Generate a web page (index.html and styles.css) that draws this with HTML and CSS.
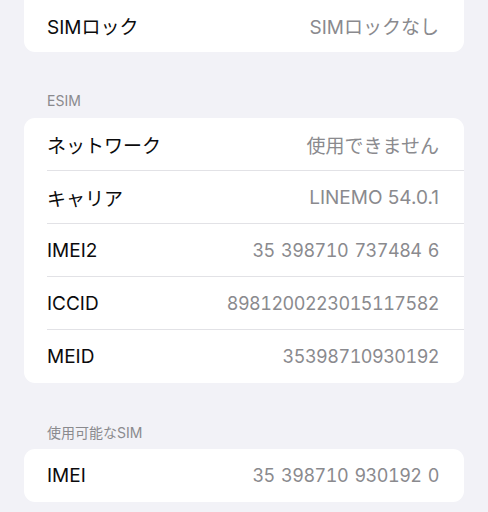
FILE: index.html
```html
<!DOCTYPE html>
<html lang="ja">
<head>
<meta charset="utf-8">
<link rel="stylesheet" href="styles.css">
</head>
<body>
<div class="page">
  <div class="card card-first">
    <div class="row"><span class="label">SIMロック</span><span class="value">SIMロックなし</span></div>
  </div>

  <div class="header header-esim">ESIM</div>
  <div class="card">
    <div class="row"><span class="label">ネットワーク</span><span class="value">使用できません</span></div>
    <div class="row"><span class="label">キャリア</span><span class="value">LINEMO 54.0.1</span></div>
    <div class="row"><span class="label">IMEI2</span><span class="value num">35 398710 737484 6</span></div>
    <div class="row"><span class="label">ICCID</span><span class="value num">8981200223015117582</span></div>
    <div class="row"><span class="label">MEID</span><span class="value num">35398710930192</span></div>
  </div>

  <div class="header header-avail">使用可能なSIM</div>
  <div class="card">
    <div class="row"><span class="label">IMEI</span><span class="value num">35 398710 930192 0</span></div>
  </div>
</div>
</body>
</html>
```
FILE: styles.css
```css
html, body {
  margin: 0;
  padding: 0;
  background: #f2f2f7;
}
body {
  font-family: Inter, "Noto Sans CJK JP", sans-serif;
  -webkit-font-smoothing: antialiased;
}
.page {
  padding: 0 24px;
  display: flex;
  flex-direction: column;
}
.card {
  background: #ffffff;
  border-radius: 11px;
  overflow: hidden;
}
.card-first {
  margin-top: -1px;
  border-top-left-radius: 0;
  border-top-right-radius: 0;
}
.row {
  box-sizing: border-box;
  height: 53px;
  margin-left: 23px;
  padding-right: 25px;
  display: flex;
  align-items: center;
  justify-content: space-between;
  border-bottom: 1px solid #e2e2e6;
}
.row:last-child {
  border-bottom: none;
}
.label {
  font-size: 19px;
  color: #0b0b0c;
}
.value {
  font-size: 19px;
  color: #8a8a8e;
}
.num {
  font-size: 18px;
  font-variant-numeric: tabular-nums;
  letter-spacing: -0.5px;
  word-spacing: 2px;
}
.header {
  font-size: 14px;
  line-height: 16px;
  color: #8a8a8e;
  padding-left: 23px;
}
.header-esim {
  margin-top: 41px;
  margin-bottom: 9px;
}
.header-avail {
  margin-top: 42px;
  margin-bottom: 8px;
}
```
